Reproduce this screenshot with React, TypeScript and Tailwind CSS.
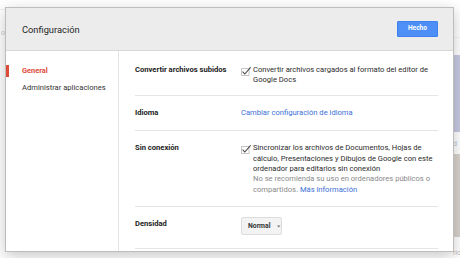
import React from "react";

function Check() {
  return (
    <svg width="11" height="10" viewBox="0 0 11 10" className="shrink-0 mt-[1px]">
      <rect x="0.5" y="2.5" width="7.5" height="7" fill="#fff" stroke="#c6c6c6" strokeWidth="1" />
      <path d="M1.6 5.6 L3.8 8 L9.6 1.4" fill="none" stroke="#4a4a4a" strokeWidth="1.1" />
    </svg>
  );
}

function Row({
  label,
  children,
  className,
  labelClass = "",
}: {
  label: string;
  children: React.ReactNode;
  className: string;
  labelClass?: string;
}) {
  return (
    <div className={`flex border-b border-[#e5e5e5] ${className}`}>
      <div className={`w-[106px] shrink-0 font-bold text-[#222] text-[7.6px] leading-[10.4px] ${labelClass}`}>{label}</div>
      <div className="flex-1">{children}</div>
    </div>
  );
}

export default function App() {
  return (
    <div className="relative w-[460px] h-[258px] overflow-hidden bg-white [font-family:Roboto,Arial,sans-serif]">
      {/* background page */}
      <div className="flex h-full">
        <div className="flex-1 flex flex-col">
          <div className="h-[10px] border-b border-[#f0f0f0]" />
          <div className="h-[30px] pl-[1px] pt-[18px] text-[7px] text-[#c8c8c8]">o</div>
        </div>
        <div className="w-[7px] flex flex-col text-[7px] text-[#bdbdbd]">
          <div className="h-[38px] border-b border-[#f2f2f2]" />
          <div className="h-[17px]" />
          <div className="h-[77px] bg-[#c7c9e3]" />
          <div className="h-[22px] pt-[8px] leading-[8px]">d</div>
          <div className="h-[83px] bg-[#d8d1cb]" />
          <div className="flex-1 pt-[12px] leading-[8px]">rio</div>
        </div>
      </div>

      {/* dialog */}
      <div className="absolute left-[5px] top-[7px] w-[449px] h-[245px] bg-white border border-[#bdbdbd] shadow-[0_4px_14px_rgba(0,0,0,0.22)] flex flex-col overflow-hidden">
        <div className="h-[43px] shrink-0 bg-[#ececec] border-b border-[#d8d8d8] flex items-center justify-between pl-[16px] pr-[15px]">
          <div className="text-[9.3px] text-[#262626] pt-[1px]">Configuración</div>
          <button className="w-[41px] h-[16px] bg-[#4d8ff7] border border-[#3e80ee] rounded-[1px] text-white text-[6.6px] font-bold flex items-center justify-center">
            Hecho
          </button>
        </div>
        <div className="flex flex-1 min-h-0">
          <div className="w-[113px] shrink-0 border-r border-[#e3e3e3] pt-[14px] flex flex-col">
            <div className="h-[12px] flex items-center border-l-[3px] border-[#dd4b39] pl-[13px] text-[7.4px] font-bold text-[#dd4b39]">
              General
            </div>
            <div className="h-[12px] mt-[5px] flex items-center pl-[16px] text-[7.6px] text-[#333]">
              Administrar aplicaciones
            </div>
          </div>
          <div className="flex-1 pl-[16px] pr-[15px] text-[7.6px] leading-[10.4px] text-[#2b2b2b]">
            <Row label="Convertir archivos subidos" className="pt-[14px] pb-[9px]">
              <div className="flex gap-[1px]">
                <Check />
                <div>Convertir archivos cargados al formato del editor de Google Docs</div>
              </div>
            </Row>
            <Row label="Idioma" className="pt-[12px] pb-[12px]">
              <div className="text-[#3b6fd6]">Cambiar configuración de idioma</div>
            </Row>
            <Row label="Sin conexión" className="pt-[12px] pb-[11px]">
              <div className="flex gap-[1px]">
                <Check />
                <div>
                  <div>
                    Sincronizar los archivos de Documentos, Hojas de cálculo, Presentaciones y Dibujos de Google con este
                    ordenador para editarlos sin conexión
                  </div>
                  <div className="text-[#8a8a8a]">
                    No se recomienda su uso en ordenadores públicos o compartidos.{" "}
                    <span className="text-[#3b6fd6]">Más información</span>
                  </div>
                </div>
              </div>
            </Row>
            <Row label="Densidad" className="pt-[10px] pb-[13px]" labelClass="mt-[2px]">
              <div className="flex">
                <div className="w-[41px] h-[18px] bg-[#f3f3f3] border border-[#dcdcdc] rounded-[2px] flex items-center pl-[6px] gap-[7px]">
                  <span className="font-bold text-[6.8px] text-[#333]">Normal</span>
                  <svg width="5" height="3" viewBox="0 0 5 3">
                    <path d="M0 0 L5 0 L2.5 3 Z" fill="#777" />
                  </svg>
                </div>
              </div>
            </Row>
          </div>
        </div>
      </div>
    </div>
  );
}
